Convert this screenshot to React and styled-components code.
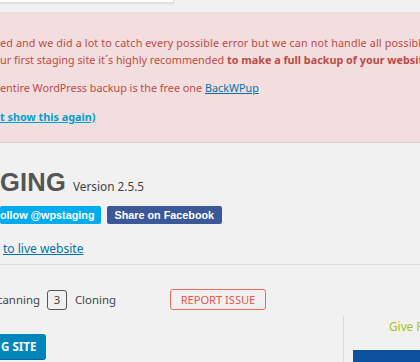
import React from 'react'
import styled, { createGlobalStyle } from 'styled-components'

const GlobalStyle = createGlobalStyle`
  html, body {
    margin: 0;
    padding: 0;
    background: #f1f1f1;
    overflow: hidden;
  }
  body {
    font-family: "Noto Sans", "Open Sans", sans-serif;
    color: #444;
  }
`

const Page = styled.div`
  width: 420px;
  height: 362px;
  overflow: hidden;
`

const SearchField = styled.div`
  width: 173px;
  height: 2px;
  background: #fff;
  border-right: 1px solid #ddd;
  border-bottom: 1px solid #ddd;
  box-shadow: 0 1px 2px rgba(0, 0, 0, 0.08);
`

const Notice = styled.div`
  margin-top: 9px;
  background: #f2dede;
  border-bottom: 1px solid #e2cccc;
  padding: 22px 0 18px 0;
  height: 131px;
  box-sizing: border-box;
  font-size: 10.8px;
  color: #bd4a47;
  white-space: nowrap;
`

const NoticeLine = styled.div`
  line-height: 17px;
  margin-top: ${p => p.$gap || 0}px;
  letter-spacing: ${p => p.$track || 0}px;
  b { font-weight: 700; }
`

const Link = styled.a`
  color: ${p => p.$light ? '#00a0d2' : '#0073aa'};
  font-weight: ${p => p.$bold ? 700 : 400};
  text-decoration: underline;
`

const Header = styled.div`
  padding-top: 24px;
`

const TitleRow = styled.div`
  display: flex;
  align-items: baseline;
  gap: 7px;
`

const Title = styled.h1`
  margin: 0;
  font-family: "Liberation Sans", Arial, sans-serif;
  font-size: 25.5px;
  line-height: 30px;
  font-weight: 700;
  color: #555;
  letter-spacing: 0.2px;
`

const Version = styled.span`
  font-size: 11.8px;
  color: #444;
`

const ShareRow = styled.div`
  display: flex;
  gap: 6px;
  margin-top: 9px;
`

const ShareButton = styled.span`
  display: inline-flex;
  align-items: center;
  height: 18px;
  padding: 0 ${p => p.$pad}px;
  border-radius: 2px;
  background: ${p => p.$bg};
  color: #fff;
  font-family: "Liberation Sans", Arial, sans-serif;
  font-weight: 700;
  font-size: 10.8px;
`

const BackLink = styled.a`
  display: inline-block;
  margin: 16px 0 0 3px;
  font-size: 12px;
  line-height: 17px;
  color: #0073aa;
  text-decoration: underline;
`

const Divider = styled.div`
  margin-top: 6px;
  height: 1px;
  background: #dcdcdc;
`

const StatusRow = styled.div`
  display: flex;
  align-items: center;
  height: 21px;
  margin: 24px 0 0 -3px;
  font-size: 11.4px;
  color: #444;
`

const StepBadge = styled.span`
  display: inline-flex;
  align-items: center;
  justify-content: center;
  width: 18px;
  height: 18px;
  margin: 0 8px 0 7px;
  border: 1px solid #555;
  border-radius: 3px;
`

const ReportButton = styled.span`
  display: inline-flex;
  align-items: center;
  justify-content: center;
  box-sizing: border-box;
  width: 96px;
  height: 21px;
  margin-left: 54px;
  border: 1px solid #ef6a5e;
  border-radius: 3px;
  color: #e8524a;
  font-size: 11.1px;
`

const Columns = styled.div`
  display: flex;
  margin-top: 6px;
`

const Main = styled.div`
  flex: 0 0 343px;
  border-right: 1px solid #dcdcdc;
  padding-top: 18px;
  height: 60px;
`

const PrimaryButton = styled.span`
  display: inline-flex;
  align-items: center;
  height: 25px;
  padding: 0 9px 0 1px;
  background: #0085ba;
  border-radius: 0 3px 3px 0;
  box-shadow: 0 1px 0 #006799;
  color: #fff;
  font-weight: 700;
  font-size: 11.6px;
`

const Sidebar = styled.div`
  flex: 1;
  min-width: 0;
  overflow: hidden;
  padding-left: 9px;
`

const Rate = styled.div`
  padding-left: 36px;
  font-size: 11.8px;
  line-height: 18px;
  margin-top: 1px;
  color: #a8c21c;
  white-space: nowrap;
`

const Banner = styled.div`
  margin-top: 15px;
  height: 20px;
  background: #0b519d;
`

export default function App() {
  return (
    <>
      <GlobalStyle />
      <Page>
        <SearchField />
        <Notice>
          <NoticeLine $track={0.12}>ed and we did a lot to catch every possible error but we can not handle all possible</NoticeLine>
          <NoticeLine>ur first staging site it´s highly recommended <b>to make a full backup of your website</b></NoticeLine>
          <NoticeLine $gap={11}>entire WordPress backup is the free one <Link href="#">BackWPup</Link></NoticeLine>
          <NoticeLine $gap={12}><Link href="#" $light $bold>t show this again)</Link></NoticeLine>
        </Notice>
        <Header>
          <TitleRow>
            <Title>GING</Title>
            <Version>Version 2.5.5</Version>
          </TitleRow>
          <ShareRow>
            <ShareButton $bg="#00aced" $pad={0}>ollow @wpstaging&nbsp;&nbsp;</ShareButton>
            <ShareButton $bg="#3b5998" $pad={8}>Share on Facebook</ShareButton>
          </ShareRow>
          <BackLink href="#">to live website</BackLink>
        </Header>
        <Divider />
        <StatusRow>
          canning
          <StepBadge>3</StepBadge>
          Cloning
          <ReportButton>REPORT ISSUE</ReportButton>
        </StatusRow>
        <Columns>
          <Main>
            <PrimaryButton>G SITE</PrimaryButton>
          </Main>
          <Sidebar>
            <Rate>Give Feedback</Rate>
            <Banner />
          </Sidebar>
        </Columns>
      </Page>
    </>
  )
}
